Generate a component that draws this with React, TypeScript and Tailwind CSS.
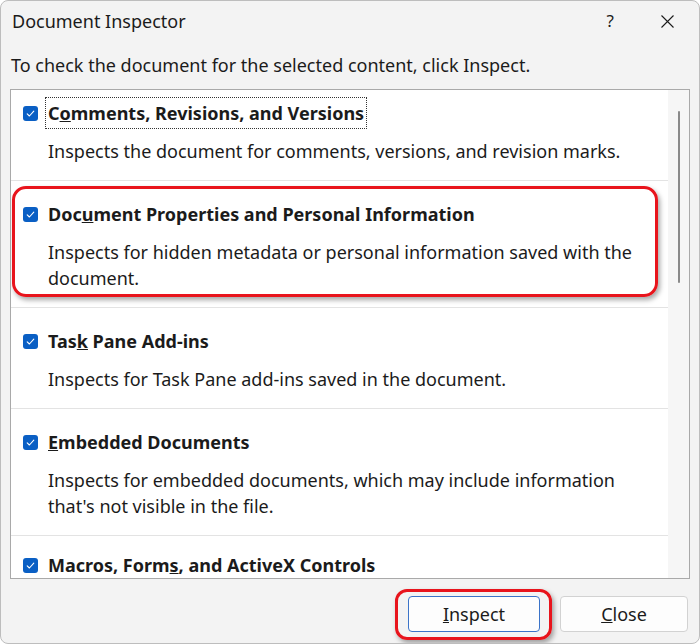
import React from "react";

const Check = () => (
  <span className="flex h-[15px] w-[15px] shrink-0 items-center justify-center rounded-[3px] bg-[#0a5fc4]">
    <svg width="11" height="11" viewBox="0 0 11 11" fill="none">
      <path d="M2.2 5.8 L4.4 8 L8.8 3.2" stroke="white" strokeWidth="1.1" strokeLinecap="round" strokeLinejoin="round" />
    </svg>
  </span>
);

type Item = { title: React.ReactNode; desc?: string[]; focus?: boolean; highlight?: boolean; first?: boolean; last?: boolean };

const items: Item[] = [
  {
    title: (<>C<u>o</u>mments, Revisions, and Versions</>),
    desc: ["Inspects the document for comments, versions, and revision marks."],
    focus: true,
    first: true,
  },
  {
    title: (<>Doc<u>u</u>ment Properties and Personal Information</>),
    desc: ["Inspects for hidden metadata or personal information saved with the", "document."],
    highlight: true,
  },
  {
    title: (<>Tas<u>k</u> Pane Add-ins</>),
    desc: ["Inspects for Task Pane add-ins saved in the document."],
  },
  {
    title: (<><u>E</u>mbedded Documents</>),
    desc: ["Inspects for embedded documents, which may include information", "that's not visible in the file."],
  },
  {
    title: (<>Macros, Form<u>s</u>, and ActiveX Controls</>),
    last: true,
  },
];

export default function App() {
  return (
    <div
      className="flex h-[644px] w-[700px] flex-col overflow-hidden rounded-[8px] border border-[#bdbdbd] bg-[#f3f3f3] text-[#1b1b1b]"
      style={{ fontFamily: '"Noto Sans", "Open Sans", sans-serif' }}
    >
      {/* title bar */}
      <div className="flex h-[40px] shrink-0 items-center pl-[11px]">
        <span className="flex-1 text-[18px] leading-[26px]">Document Inspector</span>
        <span className="mr-[46px] text-[17px] leading-[26px]">?</span>
        <span className="mr-[24px] flex items-center">
          <svg width="15" height="15" viewBox="0 0 15 15">
            <path d="M1.5 1.5 L13.5 13.5 M13.5 1.5 L1.5 13.5" stroke="#1b1b1b" strokeWidth="1.1" />
          </svg>
        </span>
      </div>

      {/* instruction */}
      <div className="mt-[11px] pl-[10px] text-[18px] leading-[26px]">
        To check the document for the selected content, click Inspect.
      </div>

      {/* list */}
      <div className="mx-[9px] mt-[11px] flex h-[490px] shrink-0 overflow-hidden border border-[#a9a9a9] bg-white">
        <div className="flex-1">
          {items.map((it, i) => (
            <div
              key={i}
              className={`relative ${it.first ? "pt-[10px]" : it.last ? "pt-[20px]" : "pt-[20px]"} ${it.last ? "" : "border-b border-[#e3e3e3] pb-[16px]"}`}
            >
              <div className="flex items-center pl-[12px]">
                <Check />
                {it.focus ? (
                  <span className="ml-[7px] -my-[3px] inline-block border border-dotted border-[#333] px-[2px] py-[2px] text-[18px] font-bold leading-[26px]">
                    {it.title}
                  </span>
                ) : (
                  <span className={`ml-[10px] text-[18px] font-bold ${it.last ? "leading-[18px]" : "leading-[26px]"}`}>{it.title}</span>
                )}
              </div>
              {it.desc && (
                <div className="mt-[12px] pl-[37px] text-[18px] leading-[26px]">
                  {it.desc.map((d, j) => (
                    <div key={j}>{d}</div>
                  ))}
                </div>
              )}
              {it.highlight && (
                <div className="pointer-events-none absolute bottom-[10px] left-[1px] right-[10px] top-[5px] rounded-[14px] border-[3px] border-[#e8141c] shadow-[2px_3px_5px_rgba(0,0,0,0.35)]" />
              )}
            </div>
          ))}
        </div>
        {/* scrollbar */}
        <div className="flex w-[21px] shrink-0 justify-center bg-[#f6f6f6] pt-[21px]">
          <div className="h-[172px] w-[2px] rounded-full bg-[#8a8a8a]" />
        </div>
      </div>

      {/* footer */}
      <div className="flex flex-1 items-start justify-end gap-[20px] pr-[11px] pt-[17px]">
        <div className="relative">
          <button className="flex h-[36px] w-[132px] items-center justify-center rounded-[4px] border-[1.5px] border-[#3b73c8] bg-[#fdfdfd] text-[18px]">
            <span><u>I</u>nspect</span>
          </button>
          <div className="pointer-events-none absolute -bottom-[8px] -left-[13px] -right-[12px] -top-[7px] rounded-[12px] border-[3px] border-[#e8141c] shadow-[2px_3px_5px_rgba(0,0,0,0.35)]" />
        </div>
        <button className="flex h-[36px] w-[128px] items-center justify-center rounded-[4px] border border-[#d2d2d2] bg-[#fdfdfd] text-[18px]">
          <span><u>C</u>lose</span>
        </button>
      </div>
    </div>
  );
}
